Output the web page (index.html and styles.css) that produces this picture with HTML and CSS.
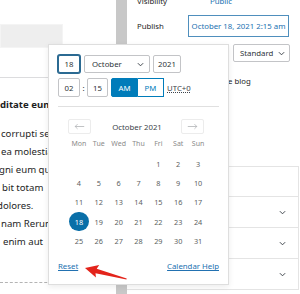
FILE: index.html
```html
<!DOCTYPE html>
<html lang="en">

<head>
    <meta charset="UTF-8">
    <meta name="viewport" content="width=device-width, initial-scale=1.0">
    <title>Post schedule</title>
    <link rel="stylesheet" href="styles.css">
</head>

<body>
    <div class="screen">
        <div class="editor">
            <div class="block-bar"></div>
            <div class="block-gap"></div>
            <div class="heading">ditate eum</div>
            <div class="para">
                <div class="line">corrupti sec</div>
                <div class="line">ea molestiae</div>
                <div class="line shift-g">gni eum quis</div>
                <div class="line shift-b">bit totam</div>
                <div class="line shift-d">dolores.</div>
                <div class="line">nam Rerum</div>
                <div class="line shift-e">enim aut</div>
            </div>
            <div class="dashed"></div>
        </div>

        <div class="scrollbar"></div>

        <div class="sidebar">
            <div class="row row-visibility">
                <span class="label">Visibility</span>
                <span class="value-link">Public</span>
            </div>
            <div class="row row-publish">
                <span class="label">Publish</span>
                <span class="date-button">October 18, 2021 2:15 am</span>
            </div>
            <div class="row row-format">
                <span class="label">Post Format</span>
                <span class="select select-format">Standard
                    <svg class="chev" viewBox="0 0 8 5"><path d="M1 1 L4 4 L7 1" /></svg>
                </span>
            </div>
            <div class="row row-sticky">
                <span class="checkbox"></span>
                <span class="sticky-text">Stick to the top of the blog</span>
            </div>
            <div class="panels">
                <div class="panel panel-first"></div>
                <div class="panel">
                    <svg class="chev panel-chev" viewBox="0 0 8 5"><path d="M1 1 L4 4 L7 1" /></svg>
                </div>
                <div class="panel">
                    <svg class="chev panel-chev" viewBox="0 0 8 5"><path d="M1 1 L4 4 L7 1" /></svg>
                </div>
                <div class="panel">
                    <svg class="chev panel-chev" viewBox="0 0 8 5"><path d="M1 1 L4 4 L7 1" /></svg>
                </div>
            </div>
        </div>

        <!-- date picker popover -->
        <div class="popover">
            <div class="date-row">
                <span class="field field-day is-focused">18</span>
                <span class="select select-month">October
                    <svg class="chev" viewBox="0 0 8 5"><path d="M1 1 L4 4 L7 1" /></svg>
                </span>
                <span class="field field-year">2021</span>
            </div>
            <div class="time-row">
                <span class="field field-hour">02</span>
                <span class="colon">:</span>
                <span class="field field-min">15</span>
                <span class="ampm">
                    <span class="ampm-btn is-active">AM</span>
                    <span class="ampm-btn">PM</span>
                </span>
                <span class="tz">UTC+0</span>
            </div>
            <div class="separator"></div>

            <div class="cal-nav">
                <span class="nav-btn">
                    <svg viewBox="0 0 14 8"><path d="M13 4 H1.5 M4.5 1 L1.5 4 L4.5 7" /></svg>
                </span>
                <span class="cal-title">October 2021</span>
                <span class="nav-btn">
                    <svg viewBox="0 0 14 8"><path d="M1 4 H12.5 M9.5 1 L12.5 4 L9.5 7" /></svg>
                </span>
            </div>

            <div class="weekdays">
                <span>Mon</span><span>Tue</span><span>Wed</span><span>Thu</span><span>Fri</span><span>Sat</span><span>Sun</span>
            </div>

            <div class="days">
                <span></span><span></span><span></span><span></span><span>1</span><span>2</span><span>3</span>
                <span>4</span><span>5</span><span>6</span><span>7</span><span>8</span><span>9</span><span>10</span>
                <span>11</span><span>12</span><span>13</span><span>14</span><span>15</span><span>16</span><span>17</span>
                <span class="is-selected">18</span><span>19</span><span>20</span><span>21</span><span>22</span><span>23</span><span>24</span>
                <span>25</span><span>26</span><span>27</span><span>28</span><span>29</span><span>30</span><span>31</span>
            </div>

            <div class="pop-footer">
                <span class="link">Reset</span>
                <span class="link">Calendar Help</span>
            </div>
        </div>

        <!-- red annotation arrow -->
        <svg class="annotation" width="300" height="294" viewBox="0 0 300 294">
            <polygon transform="translate(85 268) rotate(14.7)"
                points="0,0 13,-6.5 11.5,-2.3 43,-0.4 43,0.6 11.5,2.4 13,6.5" />
        </svg>
    </div>
</body>

</html>
```

FILE: styles.css
```css
* {
    margin: 0;
    padding: 0;
    box-sizing: border-box;
}

body,
html {
    width: 300px;
    height: 294px;
    overflow: hidden;
    background: #fff;
    font-family: "Noto Sans", "Open Sans", sans-serif;
    color: #1e1e1e;
}

.screen {
    position: relative;
    display: flex;
    width: 300px;
    height: 294px;
    overflow: hidden;
}

/* editor column */
.editor {
    width: 116px;
    flex-shrink: 0;
    overflow: hidden;
    padding-top: 24px;
}

.block-bar {
    width: 63px;
    height: 24px;
    background: #eeeeee;
    border: 1px solid #f4f4f4;
}

.block-gap {
    height: 30px;
    border-bottom: 1px solid #dcdcde;
}

.heading {
    margin-top: 18px;
    font-size: 9.6px;
    font-weight: 700;
    line-height: 18px;
    white-space: nowrap;
}

.para {
    margin-top: 11px;
    font-size: 9.6px;
    line-height: 18px;
    white-space: nowrap;
}

.line {
    padding-left: 1px;
}

.shift-g {
    text-indent: -2px;
}

.shift-b {
    padding-left: 2px;
}

.shift-d {
    text-indent: -4px;
}

.shift-e {
    padding-left: 3px;
}

.dashed {
    margin-top: 31px;
    border-top: 1px dashed #b4b4b4;
}

.scrollbar {
    width: 11px;
    flex-shrink: 0;
    background: #c8c8c8;
}

/* sidebar */
.sidebar {
    flex: 1;
    padding-left: 10px;
    font-size: 7.8px;
}

.row {
    display: flex;
    align-items: center;
    white-space: nowrap;
    padding-right: 10px;
}

.label {
    width: 51px;
    flex-shrink: 0;
}

.row-visibility {
    height: 12px;
    margin-top: -5px;
}

.value-link {
    margin-left: 22px;
    color: #2271b1;
}

.row-publish {
    margin-top: 8px;
    height: 22px;
}

.date-button {
    width: 101px;
    height: 22px;
    margin-left: auto;
    margin-right: 1px;
    border: 1px solid #4f8fbd;
    color: #2271b1;
    display: flex;
    align-items: center;
    justify-content: center;
}

.row-format {
    margin-top: 7px;
    height: 18px;
}

.select {
    display: flex;
    align-items: center;
    justify-content: space-between;
    height: 18px;
    border: 1px solid #c3c4c7;
    border-radius: 2px;
    background: #fff;
    color: #2c3338;
    font-size: 7.8px;
}

.select-format {
    width: 57px;
    margin-left: auto;
    padding: 0 4px 0 6px;
}

.chev {
    width: 7px;
    height: 5px;
    fill: none;
    stroke: #3c434a;
    stroke-width: 1.1;
}

.row-sticky {
    margin-top: 13px;
    height: 12px;
}

.checkbox {
    width: 9px;
    height: 9px;
    border: 1px solid #8c8f94;
    border-radius: 2px;
}

.sticky-text {
    margin-left: 8px;
}

.panels {
    margin-top: 79px;
    margin-left: -10px;
    margin-right: 1px;
    border-top: 1px solid #e4e4e4;
    border-right: 1px solid #e4e4e4;
}

.panel {
    height: 31px;
    border-bottom: 1px solid #e4e4e4;
    display: flex;
    align-items: center;
    justify-content: flex-end;
    padding-right: 12px;
}

.panel-first {
    height: 30px;
}

.panel-chev {
    width: 7px;
}

/* popover */
.popover {
    position: absolute;
    left: 48px;
    top: 44px;
    width: 181px;
    height: 241px;
    padding: 10px 9px;
    background: #fff;
    border: 1px solid #dedede;
    box-shadow: 0 2px 6px rgba(0, 0, 0, 0.08);
    font-size: 7.8px;
    color: #2c3338;
}

.date-row,
.time-row {
    display: flex;
    align-items: center;
}

.field {
    display: flex;
    align-items: center;
    justify-content: center;
    height: 18px;
    border: 1px solid #c3c4c7;
    border-radius: 2px;
    background: #fff;
}

.field-day {
    width: 22px;
}

.is-focused {
    border-color: #2b6a92;
    box-shadow: 0 0 0 1px #2b6a92;
}

.select-month {
    width: 66px;
    margin-left: 4px;
    padding: 0 5px 0 7px;
}

.field-year {
    width: 28px;
    margin-left: 3px;
}

.time-row {
    margin-top: 5px;
}

.time-row .field {
    height: 19px;
}

.field-hour {
    width: 22px;
}

.colon {
    width: 7px;
    text-align: center;
}

.field-min {
    width: 21px;
}

.ampm {
    display: flex;
    margin-left: 3px;
}

.ampm-btn {
    display: flex;
    align-items: center;
    justify-content: center;
    width: 27px;
    height: 19px;
    border: 1px solid #007cba;
    color: #007cba;
    background: #fff;
}

.ampm-btn + .ampm-btn {
    width: 26px;
    border-left: none;
}

.ampm-btn.is-active {
    background: #007cba;
    color: #fff;
    border-radius: 2px 0 0 2px;
}

.tz {
    margin-left: 3px;
    text-decoration: underline dotted;
    text-underline-offset: 1px;
    color: #3c434a;
}

.separator {
    margin-top: 9px;
    border-top: 1px solid #e0e0e0;
}

.cal-nav {
    display: flex;
    align-items: center;
    justify-content: space-between;
    height: 15px;
    margin: 12px 15px 0 10px;
}

.nav-btn {
    display: flex;
    align-items: center;
    justify-content: center;
    width: 23px;
    height: 15px;
    border: 1px solid #ececec;
    border-radius: 2px;
}

.nav-btn svg {
    width: 11px;
    height: 7px;
    fill: none;
    stroke: #a7aaad;
    stroke-width: 0.9;
}

.cal-title {
    color: #3c434a;
    margin-left: 2px;
}

.weekdays,
.days {
    display: grid;
    grid-template-columns: repeat(7, 1fr);
    width: 139px;
    margin: 0 auto;
    text-align: center;
}

.weekdays {
    margin-top: 4px;
    line-height: 12px;
    font-size: 7px;
    color: #8a8a8a;
}

.days {
    margin-top: 4px;
    grid-auto-rows: 19.3px;
    font-size: 7.3px;
    color: #5c5f62;
}

.days span {
    display: flex;
    align-items: center;
    justify-content: center;
}

.days .is-selected {
    width: 19.5px;
    height: 19.5px;
    margin: auto;
    border-radius: 50%;
    background: #0a6fa8;
    color: #fff;
}

.pop-footer {
    display: flex;
    justify-content: space-between;
    margin-top: 10px;
    line-height: 12px;
}

.link {
    color: #2271b1;
    text-decoration: underline;
}

.annotation {
    position: absolute;
    left: 0;
    top: 0;
    pointer-events: none;
    fill: #e3241b;
}
```
